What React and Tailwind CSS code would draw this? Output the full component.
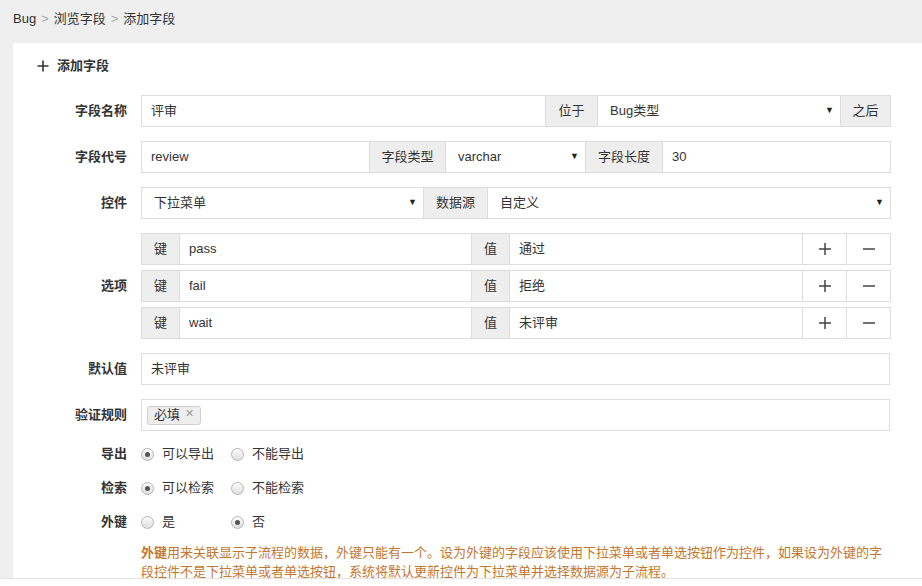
import React from 'react';

const font = { fontFamily: '"Liberation Sans", "Noto Sans CJK SC", sans-serif' };

const Addon = ({ children, className = '' }) => (
  <div className={`flex shrink-0 items-center justify-center whitespace-nowrap bg-[#eeeeee] border border-[#dcdcdc] text-[#333] -ml-px ${className}`}>
    {children}
  </div>
);

const Field = ({ children, className = '' }) => (
  <div className={`flex shrink-0 items-center whitespace-nowrap bg-white border border-[#dcdcdc] text-[#333] px-[9px] -ml-px ${className}`}>
    {children}
  </div>
);

const Select = ({ children, className = '' }) => (
  <div className={`flex shrink-0 items-center justify-between whitespace-nowrap bg-white border border-[#dcdcdc] text-[#333] pl-[12px] pr-[6px] -ml-px ${className}`}>
    <span>{children}</span>
    <span className="text-[9px] text-[#222]">▼</span>
  </div>
);

const Row = ({ label, children, className = '' }) => (
  <div className={`flex ${className}`}>
    <div className="w-[128px] shrink-0 flex items-center justify-end pr-[14px] font-bold text-[#333]">{label}</div>
    <div className="w-[749px]">{children}</div>
  </div>
);

const Radio = ({ checked }) => (
  <span className="w-[13px] h-[13px] rounded-full border border-[#b5b5b5] bg-gradient-to-b from-[#fdfdfd] to-[#dedede] flex items-center justify-center">
    {checked && <span className="w-[5px] h-[5px] rounded-full bg-[#555]" />}
  </span>
);

const RadioRow = ({ label, options, checkedIndex }) => (
  <div className="flex h-[34px] items-center">
    <div className="w-[128px] shrink-0 flex justify-end pr-[14px] font-bold text-[#333]">{label}</div>
    <div className="flex items-center">
      {options.map((o, i) => (
        <label key={o} className={`flex items-center gap-[8px] text-[#333] ${i === 0 ? 'w-[90px]' : ''}`}>
          <Radio checked={i === checkedIndex} />
          <span>{o}</span>
        </label>
      ))}
    </div>
  </div>
);

const options = [
  { key: 'pass', value: '通过' },
  { key: 'fail', value: '拒绝' },
  { key: 'wait', value: '未评审' },
];

export default function App() {
  return (
    <div className="h-[586px] overflow-hidden bg-white text-[13px]" style={font}>
      <div className="h-[579px] bg-[#efefef] border-b border-[#e2e2e2] overflow-hidden">
        {/* breadcrumb */}
        <div className="h-[43px] flex items-center pl-[13px] pb-[6px] text-[#333]">
          <span>Bug</span>
          <span className="text-[#aaa] mx-[5px]">&gt;</span>
          <span>浏览字段</span>
          <span className="text-[#aaa] mx-[5px]">&gt;</span>
          <span>添加字段</span>
        </div>

        <div className="ml-[13px] w-[940px] h-[600px] bg-white rounded-tl-[3px]">
          <div className="flex items-center h-[44px] pl-[24px] pt-[1px] font-bold text-[#333]">
            <svg width="12" height="12" viewBox="0 0 12 12" className="mr-[8px]">
              <path d="M6 0.5v11M0.5 6h11" stroke="#333" strokeWidth="1.6" />
            </svg>
            添加字段
          </div>

          <div className="pt-[8px]">
            <Row label="字段名称">
              <div className="flex h-[32px]">
                <Field className="w-[405px] ml-0">评审</Field>
                <Addon className="w-[53px]">位于</Addon>
                <Select className="w-[244px]">Bug类型</Select>
                <Addon className="w-[51px]">之后</Addon>
              </div>
            </Row>

            <Row label="字段代号" className="mt-[14px]">
              <div className="flex h-[32px]">
                <Field className="w-[229px] ml-0">review</Field>
                <Addon className="w-[77px]">字段类型</Addon>
                <Select className="w-[141px]">varchar</Select>
                <Addon className="w-[78px]">字段长度</Addon>
                <Field className="w-[229px]">30</Field>
              </div>
            </Row>

            <Row label="控件" className="mt-[14px]">
              <div className="flex h-[32px]">
                <Select className="w-[283px] ml-0">下拉菜单</Select>
                <Addon className="w-[65px]">数据源</Addon>
                <Select className="w-[404px]">自定义</Select>
              </div>
            </Row>

            <Row label="选项" className="mt-[14px]">
              <div className="flex flex-col gap-[5px]">
                {options.map((o) => (
                  <div key={o.key} className="flex h-[32px]">
                    <Addon className="w-[39px] ml-0">键</Addon>
                    <Field className="w-[293px]">{o.key}</Field>
                    <Addon className="w-[39px]">值</Addon>
                    <Field className="w-[294px]">{o.value}</Field>
                    <Field className="w-[45px] justify-center px-0">
                      <svg width="12" height="12" viewBox="0 0 12 12">
                        <path d="M6 0v12M0 6h12" stroke="#444" strokeWidth="1.5" />
                      </svg>
                    </Field>
                    <Field className="w-[45px] justify-center px-0">
                      <svg width="12" height="12" viewBox="0 0 12 12">
                        <path d="M0 6h12" stroke="#444" strokeWidth="1.5" />
                      </svg>
                    </Field>
                  </div>
                ))}
              </div>
            </Row>

            <Row label="默认值" className="mt-[14px]">
              <Field className="h-[32px] ml-0 w-[749px]">未评审</Field>
            </Row>

            <Row label="验证规则" className="mt-[14px]">
              <div className="h-[32px] border border-[#dcdcdc] flex items-center pl-[5px]">
                <span className="h-[19px] flex items-center gap-[5px] px-[6px] bg-[#eeeeee] border border-[#cfcfcf] rounded-[3px] text-[#333]">
                  必填
                  <span className="text-[#999] text-[11px] leading-none -mt-[3px]">✕</span>
                </span>
              </div>
            </Row>

            <div className="mt-[6px]">
              <RadioRow label="导出" options={['可以导出', '不能导出']} checkedIndex={0} />
              <RadioRow label="检索" options={['可以检索', '不能检索']} checkedIndex={0} />
              <RadioRow label="外键" options={['是', '否']} checkedIndex={1} />
            </div>

            <div className="ml-[128px] pt-[4px] w-[752px] text-[#c4762e] leading-[19px]">
              <span className="font-bold">外键</span>用来关联显示子流程的数据，外键只能有一个。设为外键的字段应该使用下拉菜单或者单选按钮作为控件，如果设为外键的字段控件不是下拉菜单或者单选按钮，系统将默认更新控件为下拉菜单并选择数据源为子流程。
            </div>
          </div>
        </div>
      </div>
    </div>
  );
}
